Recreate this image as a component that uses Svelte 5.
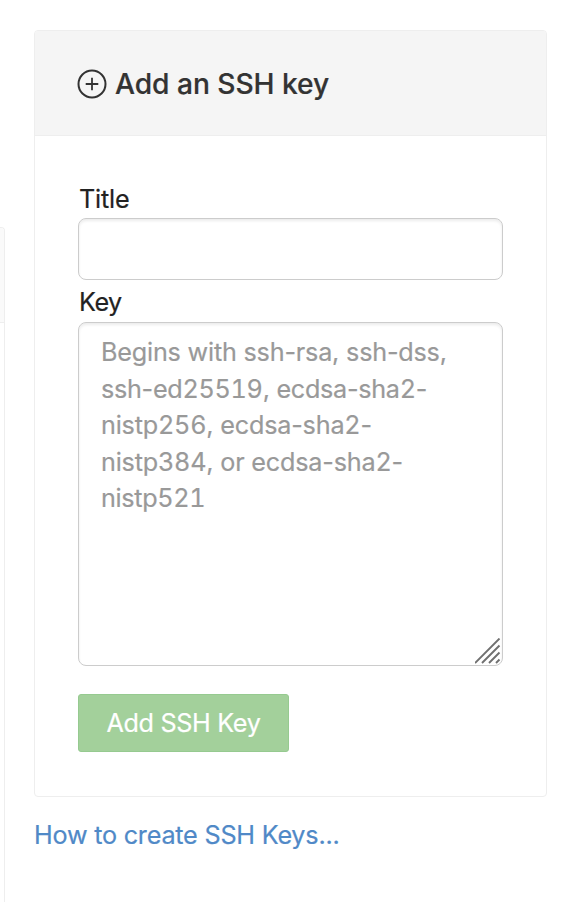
<script>
  let title = $state('');
  let key = $state('');
</script>

<div class="page">
  <div class="neighbor"><div class="neighbor-head"></div></div>
  <main>
    <section class="card">
      <header>
        <svg width="30" height="30" viewBox="0 0 30 30" fill="none" stroke="#333" aria-hidden="true">
          <circle cx="15" cy="15" r="13.5" stroke-width="2" />
          <path d="M15 8.7v12.6M8.7 15h12.6" stroke-width="1.8" />
        </svg>
        <h2>Add an SSH key</h2>
      </header>
      <form onsubmit={(e) => e.preventDefault()}>
        <label for="title">Title</label>
        <input id="title" bind:value={title} />
        <label for="key" class="second">Key</label>
        <div class="area">
          <textarea id="key" bind:value={key}></textarea>
          {#if !key}
            <div class="hint">
              <div class="l1">Begins with ssh-rsa, ssh-dss,</div>
              <div class="l2">ssh-ed<b>25519</b>, ecdsa-sha<b>2</b>-</div>
              <div class="l3">nistp<b>256</b>, ecdsa-sha<b>2</b>-</div>
              <div class="l4">nistp<b>384</b>, or ecdsa-sha<b>2</b>-</div>
              <div class="l5">nistp<b>521</b></div>
            </div>
          {/if}
          <svg class="grip" width="26" height="26" viewBox="0 0 26 26" stroke="#707070" stroke-width="1.9" aria-hidden="true">
            <path d="M0 25l24.5-24.5M7 25l17.5-17.5M14 25l10.5-10.5M21 25l3.5-3.5" />
          </svg>
        </div>
        <button>Add SSH Key</button>
      </form>
    </section>
    <a href="#help">How to create SSH Keys...</a>
  </main>
</div>

<style>
  :global(body) { background: #fff; }
  .page {
    display: flex;
    box-sizing: border-box;
    width: 576px;
    height: 902px;
    overflow: hidden;
    font: 25.2px/36px Inter, "Liberation Sans", sans-serif;
    -webkit-text-stroke: 0.2px;
    color: #222;
  }
  .neighbor {
    box-sizing: border-box;
    width: 5px;
    height: 690px;
    margin: 227px 29px 0 0;
    border: solid #eee;
    border-width: 1px 1px 0 0;
    border-radius: 0 4px 0 0;
    overflow: hidden;
  }
  .neighbor-head { height: 94px; background: #fafafa; border-bottom: 1px solid #eee; }
  main { width: 513px; padding-top: 30px; }
  .card {
    box-sizing: border-box;
    height: 767px;
    border: 1px solid #eee;
    border-radius: 4px;
    overflow: hidden;
  }
  header {
    box-sizing: border-box;
    display: flex;
    align-items: center;
    height: 105px;
    padding: 1px 43px 0 42.5px;
    background: #f5f5f5;
    border-bottom: 1px solid #eee;
  }
  h2 {
    margin: 0 0 0 8px;
    font-size: 28.2px;
    line-height: 36px;
    font-weight: 500;
    letter-spacing: -0.05px;
    color: #333;
    white-space: nowrap;
  }
  header svg { margin: 0 0 0 -0.5px; }
  form { display: flex; flex-direction: column; padding: 45px 43px 0; }
  label { height: 37px; line-height: 37px; padding-left: 1px; letter-spacing: -0.2px; }
  .second { height: 42px; line-height: 45px; letter-spacing: -0.5px; }
  input, textarea {
    display: block;
    box-sizing: border-box;
    width: 425px;
    margin: 0;
    border: 1px solid #ccc;
    border-radius: 8px;
    background: #fff;
    box-shadow: inset 0 2px 3px rgba(0, 0, 0, .08);
    font: inherit;
    outline: none;
    color: #333;
  }
  input { height: 62px; padding: 12px 22px; }
  .area { position: relative; height: 344px; }
  textarea {
    height: 344px;
    padding: 11px 22px;
    line-height: 36.5px;
    resize: none;
    overflow: hidden;
  }
  .hint {
    position: absolute;
    inset: 12px 23px auto;
    line-height: 36.5px;
    color: #999;
    white-space: nowrap;
    pointer-events: none;
  }
  .hint b { font-weight: inherit; font-variant-numeric: tabular-nums; }
  .l1 { letter-spacing: -0.2px; }
  .l2 { letter-spacing: -0.29px; }
  .l3 { letter-spacing: -0.2px; }
  .l4 { letter-spacing: -0.2px; }
  .l5 { letter-spacing: -0.34px; }
  .grip { position: absolute; right: 2px; bottom: 2px; }
  button {
    width: 211px;
    height: 58px;
    margin-top: 28px;
    padding: 0;
    border: 1px solid #96ca90;
    border-radius: 3px;
    background: #a3d09b;
    color: #fff;
    font: inherit;
    letter-spacing: -0.33px;
    white-space: nowrap;
  }
  a {
    display: block;
    margin-top: 20px;
    color: #5089c7;
    letter-spacing: -0.22px;
    text-decoration: none;
    white-space: nowrap;
  }
</style>
